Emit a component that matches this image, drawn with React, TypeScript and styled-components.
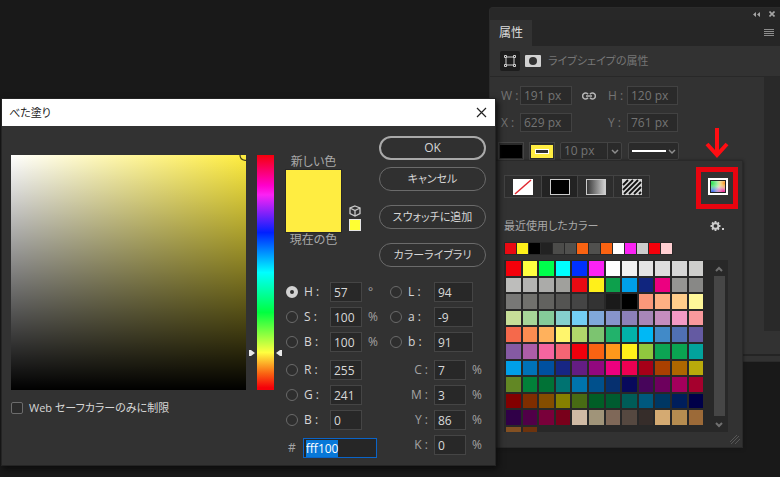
import React, { useEffect, useRef } from "react";
import styled, { createGlobalStyle, css } from "styled-components";

const GlobalStyle = createGlobalStyle`
  * { box-sizing: border-box; }
  html, body, #root { height: 100%; }
  body {
    margin: 0;
    background: #191919;
    color: #d6d6d6;
    font: 12px/16px "Open Sans", "Noto Sans CJK JP", sans-serif;
    font-feature-settings: "palt";
    overflow: hidden;
  }
  button, input, select { font: inherit; color: inherit; margin: 0; padding: 0; }
`;

const Desktop = styled.main`
  position: relative;
  height: 100%;
  min-height: 470px;
  overflow: hidden;
`;

const PlainButton = styled.button`
  display: flex;
  align-items: center;
  justify-content: center;
  border: 0;
  background: none;
  color: #b0b0b0;
`;

/* ---------- Properties panel ---------- */

const Panel = styled.section`
  position: absolute;
  top: 7px;
  left: 489px;
  right: 0;
  border: 1px solid #2b2b2b;
  border-right: 0;
  border-radius: 4px 0 0 0;
  background: #323232;
`;

const PanelTop = styled.div`
  display: flex;
  justify-content: flex-end;
  align-items: center;
  gap: 9px;
  height: 12px;
  padding-right: 5px;
  background: #282828;
`;

const TabStrip = styled.div`
  display: flex;
  justify-content: space-between;
  height: 26px;
  padding-right: 6px;
  background: #262626;
`;

const PanelTab = styled.h2`
  margin: 0;
  padding: 5px 9px;
  background: #323232;
  color: #dedede;
  font-size: 12px;
  font-weight: 400;
`;

const PanelHeading = styled.div`
  display: flex;
  align-items: center;
  height: 31px;
  padding-left: 10px;
  border-bottom: 1px solid #282828;
  color: #767676;
  font-size: 11px;
`;

const ModeButton = styled(PlainButton)<{ $active?: boolean }>`
  width: ${(p) => (p.$active ? 20 : 16)}px;
  height: 20px;
  margin-right: ${(p) => (p.$active ? 5 : 7)}px;
  border-radius: 2px;
  background: ${(p) => (p.$active ? "#1d1d1d" : "none")};
`;

const PanelBody = styled.div`
  display: flex;
  justify-content: space-between;
  height: 279px;
  border-bottom: 2px solid #242424;
`;

const PanelForm = styled.div`
  display: flex;
  flex-direction: column;
  gap: 8px;
  padding: 9px 0 0 8px;
`;

const PanelTrack = styled.div`
  width: 16px;
  height: 254px;
  background: #292929;
`;

const PanelFoot = styled.div`
  height: 5px;
`;

const MeasureRow = styled.div`
  display: grid;
  grid-template-columns: 22px 52px 33px 22px 51px;
  align-items: center;
  height: 19px;
  color: #747474;
`;

const MeasureLabel = styled.label`
  padding-left: 3px;
  white-space: nowrap;
`;

const MeasureInput = styled.input`
  width: 100%;
  height: 19px;
  padding-left: 3px;
  border: 1px solid #424242;
  background: #2a2a2a;
`;

const LinkSlot = styled.span`
  display: flex;
  justify-content: center;
`;

const StrokeRow = styled.div`
  display: flex;
  height: 19px;
  margin-top: 2px;
  color: #747474;
`;

const PaintButton = styled.button`
  display: flex;
  width: 26px;
  height: 18px;
  margin-right: 5px;
  border: 1px solid #454545;
  background: #2a2a2a;
  padding: 2px 1px;
`;

const DropDown = styled.div<{ $width: number }>`
  position: relative;
  display: flex;
  align-items: center;
  width: ${(p) => p.$width}px;
  height: 18px;
  border: 1px solid #434343;
  border-radius: 2px;
  background: #2a2a2a;
  & + & { margin-left: 6px; }
`;

const DropSelect = styled.select`
  width: 100%;
  height: 100%;
  padding-left: 3px;
  border: 0;
  appearance: none;
  background: none;
`;

const DropMark = styled.svg`
  position: absolute;
  top: 0;
  right: 0;
  pointer-events: none;
`;

/* ---------- Swatch popup ---------- */

const Popup = styled.section`
  position: absolute;
  top: 152px;
  left: 0;
  width: 253px;
  padding: 14px 14px 15px 13px;
  border: 1px solid #292929;
  background: #323232;
  box-shadow: 0 1px 3px #161616;
`;

const PopupTools = styled.div`
  display: flex;
  justify-content: space-between;
  align-items: center;
`;

const FillTabs = styled.div`
  display: flex;
  border: 1px solid #434343;
`;

const FillTab = styled(PlainButton)<{ $active?: boolean }>`
  width: 36px;
  height: 21px;
  background: ${(p) => (p.$active ? "#232323" : "#2d2d2d")};
  & + & { border-left: 1px solid #434343; }
`;

const RecentHead = styled.div`
  display: flex;
  justify-content: space-between;
  align-items: center;
  margin: 20px 3px 8px 0;
  color: #a8a8a8;
  font-size: 11px;
`;

const RecentRow = styled.div`
  display: grid;
  grid-template-columns: repeat(14, 11px);
  gap: 1px;
  width: max-content;
  padding: 1px;
  background: #292929;
`;

const Chip = styled.button<{ $color: string }>`
  width: 100%;
  aspect-ratio: 1;
  border: 0;
  background: ${(p) => p.$color};
`;

const SwatchList = styled.div`
  display: flex;
  justify-content: space-between;
  height: 172px;
  margin-top: 5px;
  padding-left: 2px;
  overflow: hidden;
  background: #282828;
`;

const SwatchGrid = styled.div`
  display: grid;
  grid-template-columns: repeat(12, 1fr);
  align-content: start;
  gap: 2px;
  width: 197px;
  padding-top: 1px;
`;

const ScrollBar = styled.div`
  display: flex;
  flex-direction: column;
  align-items: center;
  width: 15px;
  padding-right: 3px;
`;

const Thumb = styled.div`
  flex: 1;
  width: 11px;
  background: #464646;
`;

const Grip = styled.svg`
  position: absolute;
  right: 2px;
  bottom: 2px;
`;

const Marker = styled.svg`
  position: absolute;
  top: -36px;
  right: 4px;
  pointer-events: none;
`;

/* ---------- Colour picker dialog ---------- */

const Dialog = styled.section`
  position: absolute;
  top: 98px;
  left: 1px;
  right: 284px;
  min-width: 494px;
  border: 1px solid #242424;
  background: #323232;
  box-shadow: 2px 3px 6px #0c0c0c;
`;

const TitleBar = styled.header`
  display: flex;
  justify-content: space-between;
  align-items: center;
  height: 27px;
  padding: 0 8px 0 7px;
  background: #fff;
  color: #222;
`;

const Title = styled.h1`
  margin: 0;
  font-size: 11px;
  font-weight: 400;
`;

const DialogBody = styled.div`
  display: flex;
  gap: 12px;
  padding: 10px 9px 7px 9px;
`;

const PickArea = styled.div`
  flex: 1;
  padding-top: 19px;
`;

const Spectrum = styled.div`
  display: flex;
  gap: 11px;
`;

const ColorField = styled.div`
  flex: 1;
  height: 235px;
  display: flex;
  justify-content: flex-end;
  background:
    linear-gradient(to bottom, transparent, #000),
    linear-gradient(to right, #fff, #ffed3f);
`;

const HueBar = styled.div`
  position: relative;
  width: 17px;
  height: 235px;
  background: linear-gradient(#f5000a 0%, #f0c 13%, #fb22f4 17%, #0020ff 33%, #0ff 50%, #00ff40 67%, #ffff40 84%, #f96312 93%, #f5000a 99%);
`;

const HueMarks = styled.svg`
  position: absolute;
  left: -9px;
  bottom: 33px;
`;

const WebOnly = styled.label`
  display: flex;
  align-items: center;
  gap: 6px;
  margin-top: 10px;
  font-size: 11px;
`;

const CheckBox = styled.input`
  appearance: none;
  width: 12px;
  height: 12px;
  border: 1px solid #6c6c6c;
  border-radius: 2px;
  background: #2b2b2b;
`;

const Controls = styled.div`
  width: 200px;
`;

const UpperControls = styled.div`
  display: flex;
  justify-content: space-between;
  height: 146px;
`;

const Preview = styled.div`
  display: flex;
  align-items: flex-end;
  gap: 8px;
  height: 112px;
`;

const Compare = styled.div`
  display: flex;
  flex-direction: column;
  align-items: center;
  width: 55px;
  white-space: nowrap;
  color: #a9a9a9;
`;

const BigSwatch = styled.div`
  width: 55px;
  height: 62px;
  outline: 1px solid #272727;
  background: #ffed41;
`;

const WebSafe = styled.div`
  display: flex;
  flex-direction: column;
  align-items: center;
  gap: 2px;
  padding-bottom: 17px;
`;

const SmallSwatch = styled.button`
  width: 12px;
  height: 12px;
  border: 1px solid #e6e6e6;
  background: #ffff33;
`;

const Actions = styled.div`
  display: grid;
  grid-template-rows: 31px 38px 38px 24px;
  width: 107px;
`;

const Pill = styled.button<{ $primary?: boolean }>`
  height: 24px;
  border: ${(p) => (p.$primary ? "2px solid #a9a9a9" : "1px solid #6b6b6b")};
  border-radius: 12px;
  background: #303030;
  font-size: ${(p) => (p.$primary ? 12 : 11)}px;
  white-space: nowrap;
`;

const Values = styled.div`
  display: flex;
  gap: 11px;
`;

const ValueColumn = styled.div`
  display: flex;
  flex-direction: column;
  gap: 8px;
`;

const ValueGroup = styled.div`
  display: grid;
  gap: 5px;
`;

const ValueRow = styled.div`
  display: grid;
  grid-template-columns: 12px 32px 49px;
  align-items: center;
  height: 20px;
`;

const Radio = styled.input`
  appearance: none;
  width: 12px;
  height: 12px;
  border: 1px solid #6a6a6a;
  border-radius: 50%;
  background: #2e2e2e;
  &:checked { border: 4px solid #d2d2d2; }
`;

const ValueLabel = styled.label<{ $quiet?: boolean }>`
  padding-left: 6px;
  white-space: pre;
  ${(p) => p.$quiet && css`
    grid-column: 1 / 3;
    justify-self: end;
    padding: 0 6px 0 0;
    color: #a3a3a3;
  `}
`;

const ValueCell = styled.span`
  display: flex;
  align-items: center;
  gap: 6px;
  color: #a3a3a3;
`;

const ValueInput = styled.input<{ $wide?: boolean }>`
  width: ${(p) => (p.$wide ? 39 : 32)}px;
  height: 20px;
  padding-left: 3px;
  border: 1px solid #454545;
  background: #282828;
  color: #d8d8d8;
`;

const HexRow = styled.label`
  display: flex;
  align-items: center;
  gap: 7px;
  padding-left: 2px;
  color: #a3a3a3;
`;

const HexInput = styled.input`
  width: 74px;
  height: 20px;
  padding-left: 2px;
  border: 1px solid #0a64c8;
  outline: 0;
  background: #262626;
  color: #e8e8e8;
  &::selection { background: #0878d8; color: #fff; }
`;

const RECENT = ["#ea0a12", "#fff01a", "#000", "#222", "#4c4c4a", "#50504e", "#f96312", "#50504e", "#f96312", "#fff", "#fb22f4", "#ccc", "#f5000a", "#ffcfd2"];

const SWATCHES = `
f5000a ffff40 00ff4c 00ffff 0030ff fb22f4 ffffff f1f1f1 e4e4e4 dddddd d6d6d6 cdcdcb
bdbdbb b4b4b2 ababa9 a0a09c ea0a12 fff01a 0da04c 009fe8 10257e ec0080 959593 888886
787876 71716d 62625f 545452 454545 333333 1a1a1a 000000 fb987a ffb083 ffcd8b fff799
c7de98 a6d598 85cb99 85cfcd 73cef5 80a8da 8794cb 8c80b8 a886b8 c68dbe f49ac4 f9999c
f5694b fa8c51 ffb15c fff56c b1d66b 7cc470 22b26b 02b1a9 00b8f5 418ac8 5070b3 645aa2
855aa3 ac5da8 f5659f f56574 f0000c f96312 ff981b fff01a 90c83e 0ca453 0aa451 02a39c
009fe8 0072b8 0050a0 172684 641d83 92087f ed007f ed0052 a60018 aa4000 ad6700 b9aa0b
628724 028039 017236 007371 0074ad 00508c 06306f 08095c 47055b 6d005d a4005c a5002d
820000 7f2d00 844d00 858000 486b14 015e26 005b30 005c58 00587d 003763 001e5b 000048
300048 500048 79003a 79001b d0baa4 a09479 7f6858 554840 362d2a d4aa72 b58c50 9c6a38
835022 6d330d`.trim().split(/\s+/);

const Chevron = ({ up = false }: { up?: boolean }) => (
  <svg width="10" height="16" viewBox="0 0 10 16" fill="none" stroke="#707070" strokeWidth="2">
    <path d={up ? "M2 11l3-3 3 3" : "M2 7l3 3 3-3"} />
  </svg>
);

type FieldProps = { name: string; value: string; unit?: string; radio?: boolean; wide?: boolean; checked?: boolean; id: string };

const Field = ({ name, value, unit, radio, wide, checked, id }: FieldProps) => (
  <ValueRow>
    {radio && <Radio type="radio" name="channel" aria-label={`${name} channel`} defaultChecked={checked} />}
    <ValueLabel htmlFor={id} $quiet={!radio}>{name} :</ValueLabel>
    <ValueCell>
      <ValueInput id={id} defaultValue={value} $wide={wide} />
      {unit}
    </ValueCell>
  </ValueRow>
);

const ColorDialog = () => {
  const hex = useRef<HTMLInputElement>(null);
  useEffect(() => {
    hex.current?.focus();
    hex.current?.select();
  }, []);
  return (
    <Dialog role="dialog" aria-labelledby="dialog-title">
      <TitleBar>
        <Title id="dialog-title">べた塗り</Title>
        <PlainButton aria-label="閉じる">
          <svg width="11" height="11" viewBox="0 0 11 11" stroke="#222" strokeWidth="1.2">
            <path d="M1 1l9 9M10 1l-9 9" />
          </svg>
        </PlainButton>
      </TitleBar>
      <DialogBody>
        <PickArea>
          <Spectrum>
            <ColorField>
              <svg width="7" height="6" viewBox="0 0 7 6" fill="none" stroke="#443f18" strokeWidth="1.2">
                <path d="M1 0c0 3 2 5 5 5.300h1" />
              </svg>
            </ColorField>
            <HueBar>
              <HueMarks width="35" height="8" viewBox="0 0 35 8" fill="#e8e8e8">
                <path d="M1 1h2l4 3-4 3H1zM34 1h-2l-4 3 4 3h2z" />
              </HueMarks>
            </HueBar>
          </Spectrum>
          <WebOnly>
            <CheckBox type="checkbox" />
            Web セーフカラーのみに制限
          </WebOnly>
        </PickArea>
        <Controls>
          <UpperControls>
            <Preview>
              <Compare>
                新しい色
                <BigSwatch />
                現在の色
              </Compare>
              <WebSafe>
                <svg width="12" height="12" viewBox="0 0 12 12" fill="none" stroke="#c9c9c9" strokeWidth="1.300">
                  <path d="M6 1l5 2v5.500L6 11 1 8.500V3zM1 3l5 2.500L11 3M6 5.500V11" />
                </svg>
                <SmallSwatch aria-label="Web セーフカラー" />
              </WebSafe>
            </Preview>
            <Actions>
              <Pill $primary>OK</Pill>
              <Pill>キャンセル</Pill>
              <Pill>スウォッチに追加</Pill>
              <Pill>カラーライブラリ</Pill>
            </Actions>
          </UpperControls>
          <Values>
            <ValueColumn>
              <ValueGroup>
                <Field id="hue" name="H" value="57" unit="°" radio checked />
                <Field id="sat" name="S" value="100" unit="%" radio />
                <Field id="bri" name="B" value="100" unit="%" radio />
              </ValueGroup>
              <ValueGroup>
                <Field id="red" name="R" value="255" radio />
                <Field id="green" name="G" value="241" radio />
                <Field id="blue" name="B" value="0" radio />
              </ValueGroup>
              <HexRow>
                #
                <HexInput ref={hex} defaultValue="fff100" />
              </HexRow>
            </ValueColumn>
            <ValueColumn>
              <ValueGroup>
                <Field id="lab-l" name="L" value="94" radio wide />
                <Field id="lab-a" name="a" value="-9" radio wide />
                <Field id="lab-b" name="b" value="91" radio wide />
              </ValueGroup>
              <ValueGroup>
                <Field id="cyan" name="C" value="7" unit="%" />
                <Field id="magenta" name="M" value="3" unit="%" />
                <Field id="yellow" name="Y" value="86" unit="%" />
                <Field id="key" name="K" value="0" unit="%" />
              </ValueGroup>
            </ValueColumn>
          </Values>
        </Controls>
      </DialogBody>
    </Dialog>
  );
};

const SwatchPopup = () => (
  <Popup aria-label="カラー">
    <PopupTools>
      <FillTabs>
        <FillTab aria-label="なし">
          <svg width="20" height="16" viewBox="0 0 20 16">
            <rect width="20" height="16" fill="#fff" />
            <path d="M2 15L18 1" stroke="#e02830" strokeWidth="1.500" />
          </svg>
        </FillTab>
        <FillTab aria-label="べた塗り" $active>
          <svg width="20" height="16" viewBox="0 0 20 16">
            <rect x=".5" y=".5" width="19" height="15" fill="#000" stroke="#ccc" />
          </svg>
        </FillTab>
        <FillTab aria-label="グラデーション">
          <svg width="20" height="16" viewBox="0 0 20 16">
            <linearGradient id="ramp"><stop stopColor="#333" /><stop offset="1" stopColor="#d4d4d4" /></linearGradient>
            <rect x=".5" y=".5" width="19" height="15" fill="url(#ramp)" stroke="#ccc" />
          </svg>
        </FillTab>
        <FillTab aria-label="パターン">
          <svg width="20" height="16" viewBox="0 0 20 16">
            <rect width="20" height="16" fill="#d4d4d4" />
            <path d="M1 6l5-5M1 11L11 1M2 15L16 1M7 15L19 3M12 15l7-7M17 15l2-2" stroke="#111" strokeWidth="1.800" />
          </svg>
        </FillTab>
      </FillTabs>
      <PlainButton aria-label="カラーピッカー">
        <svg width="20" height="17" viewBox="0 0 20 17">
          <defs>
            <radialGradient id="green" cx="0" cy=".2" r=".7"><stop stopColor="#22e04a" /><stop offset="1" stopColor="#22e04a" stopOpacity="0" /></radialGradient>
            <radialGradient id="blue-glow" cx=".1" cy="1" r=".6"><stop stopColor="#3a5cf0" /><stop offset="1" stopColor="#3a8cf0" stopOpacity="0" /></radialGradient>
            <radialGradient id="pink" cx=".9" cy="1" r=".7"><stop stopColor="#f0208c" /><stop offset="1" stopColor="#f060d0" stopOpacity="0" /></radialGradient>
            <radialGradient id="orange" cx="1" cy=".2" r=".6"><stop stopColor="#ff8a20" /><stop offset="1" stopColor="#ffd040" stopOpacity="0" /></radialGradient>
          </defs>
          <rect x="1" y="1" width="18" height="15" fill="#222" stroke="#fff" strokeWidth="2" />
          <rect x="3" y="3" width="14" height="11" fill="#e6f4dc" />
          <rect x="3" y="3" width="14" height="11" fill="url(#green)" />
          <rect x="3" y="3" width="14" height="11" fill="url(#blue-glow)" />
          <rect x="3" y="3" width="14" height="11" fill="url(#pink)" />
          <rect x="3" y="3" width="14" height="11" fill="url(#orange)" />
        </svg>
      </PlainButton>
    </PopupTools>
    <RecentHead>
      最近使用したカラー
      <PlainButton aria-label="設定">
        <svg width="15" height="12" viewBox="0 0 15 12">
          <circle cx="5.500" cy="6" r="2.800" fill="none" stroke="#ccc" strokeWidth="2" />
          <path d="M5.500 1v10M.5 6h2M8.500 6h2M2 2.500l1.500 1.500M7.500 8L9 9.500M9 2.500L7.500 4M3.500 8L2 9.500" stroke="#ccc" strokeWidth="1.800" />
          <circle cx="5.500" cy="6" r="1.800" fill="#323232" />
          <rect x="12" y="8" width="2" height="2" fill="#ccc" />
        </svg>
      </PlainButton>
    </RecentHead>
    <RecentRow>
      {RECENT.map((c, i) => <Chip key={i} $color={c} aria-label={c} />)}
    </RecentRow>
    <SwatchList>
      <SwatchGrid>
        {SWATCHES.map((c, i) => <Chip key={i} $color={`#${c}`} aria-label={`#${c}`} />)}
      </SwatchGrid>
      <ScrollBar>
        <Chevron up />
        <Thumb />
        <Chevron />
      </ScrollBar>
    </SwatchList>
    <Grip width="10" height="11" viewBox="0 0 10 11" stroke="#565656">
      <path d="M0 8l7-7M1 10l8-8M5 10l5-5" />
    </Grip>
    <Marker width="42" height="84" viewBox="0 0 42 84" fill="none" stroke="#e8040f" strokeWidth="5">
      <path d="M21 3v27M11 19l10 11 10-11" strokeWidth="4" stroke="#ff0d12" />
      <rect x="2.500" y="44.500" width="37" height="37" />
    </Marker>
  </Popup>
);

const PropertiesPanel = () => (
  <Panel>
    <PanelTop>
      <PlainButton aria-label="折りたたむ">
        <svg width="7" height="5" viewBox="0 0 7 5" fill="#a5a5a5"><path d="M3 0v5L0 2.500zM7 0v5L4 2.500z" /></svg>
      </PlainButton>
      <PlainButton aria-label="閉じる">
        <svg width="6" height="6" viewBox="0 0 6 6" stroke="#a5a5a5" strokeWidth="1.600"><path d="M.5.5l5 5M5.500.5l-5 5" /></svg>
      </PlainButton>
    </PanelTop>
    <TabStrip>
      <PanelTab>属性</PanelTab>
      <PlainButton aria-label="メニュー">
        <svg width="10" height="8" viewBox="0 0 10 8" stroke="#8c8c8c"><path d="M0 .5h10M0 2.500h10M0 4.500h10M0 6.500h10" /></svg>
      </PlainButton>
    </TabStrip>
    <PanelHeading>
      <ModeButton $active aria-label="シェイプ">
        <svg width="12" height="12" viewBox="0 0 12 12" fill="#1d1d1d" stroke="#d0d0d0">
          <path d="M2 2h8v8H2z" />
          <path d="M.5.5h2v2h-2zM9.500.5h2v2h-2zM.5 9.500h2v2h-2zM9.500 9.500h2v2h-2z" />
        </svg>
      </ModeButton>
      <ModeButton aria-label="マスク">
        <svg width="16" height="12" viewBox="0 0 16 12"><rect width="16" height="12" rx="1" fill="#d2d2d2" /><circle cx="8" cy="6" r="4" fill="#333" /></svg>
      </ModeButton>
      ライブシェイプの属性
    </PanelHeading>
    <PanelBody>
      <PanelForm>
        <MeasureRow>
          <MeasureLabel htmlFor="w">W :</MeasureLabel>
          <MeasureInput id="w" defaultValue="191 px" />
          <LinkSlot>
            <svg width="14" height="8" viewBox="0 0 14 8" fill="none" stroke="#b5b5b5" strokeWidth="1.600">
              <path d="M6 2.200A3 3 0 1 0 6 5.800M8 2.200A3 3 0 1 1 8 5.800M4 4h6" />
            </svg>
          </LinkSlot>
          <MeasureLabel htmlFor="h">H :</MeasureLabel>
          <MeasureInput id="h" defaultValue="120 px" />
        </MeasureRow>
        <MeasureRow>
          <MeasureLabel htmlFor="x">X :</MeasureLabel>
          <MeasureInput id="x" defaultValue="629 px" />
          <span />
          <MeasureLabel htmlFor="y">Y :</MeasureLabel>
          <MeasureInput id="y" defaultValue="761 px" />
        </MeasureRow>
        <StrokeRow>
          <PaintButton aria-label="塗り">
            <svg width="22" height="13" viewBox="0 0 22 13"><rect width="22" height="13" /></svg>
          </PaintButton>
          <PaintButton aria-label="線">
            <svg width="22" height="13" viewBox="0 0 22 13">
              <rect width="22" height="13" fill="#ffed41" />
              <rect x="4.500" y="4.500" width="13" height="4" fill="#323232" stroke="#fff" />
            </svg>
          </PaintButton>
          <DropDown $width={62}>
            <DropSelect aria-label="線の幅"><option>10 px</option></DropSelect>
            <DropMark width="14" height="16" viewBox="0 0 14 16" fill="none">
              <path d="M.5 0v16" stroke="#434343" />
              <path d="M5 7l3 3 3-3" stroke="#8e8e8e" strokeWidth="1.500" />
            </DropMark>
          </DropDown>
          <DropDown $width={51}>
            <DropSelect aria-label="線の種類"><option aria-label="実線" /></DropSelect>
            <DropMark width="49" height="16" viewBox="0 0 49 16" fill="none">
              <path d="M3 8h34" stroke="#fff" strokeWidth="2" />
              <path d="M40 7l3 3 3-3" stroke="#8e8e8e" strokeWidth="1.500" />
            </DropMark>
          </DropDown>
        </StrokeRow>
      </PanelForm>
      <PanelTrack />
    </PanelBody>
    <PanelFoot />
    <SwatchPopup />
  </Panel>
);

export default function App() {
  return (
    <>
      <GlobalStyle />
      <Desktop>
        <PropertiesPanel />
        <ColorDialog />
      </Desktop>
    </>
  );
}
